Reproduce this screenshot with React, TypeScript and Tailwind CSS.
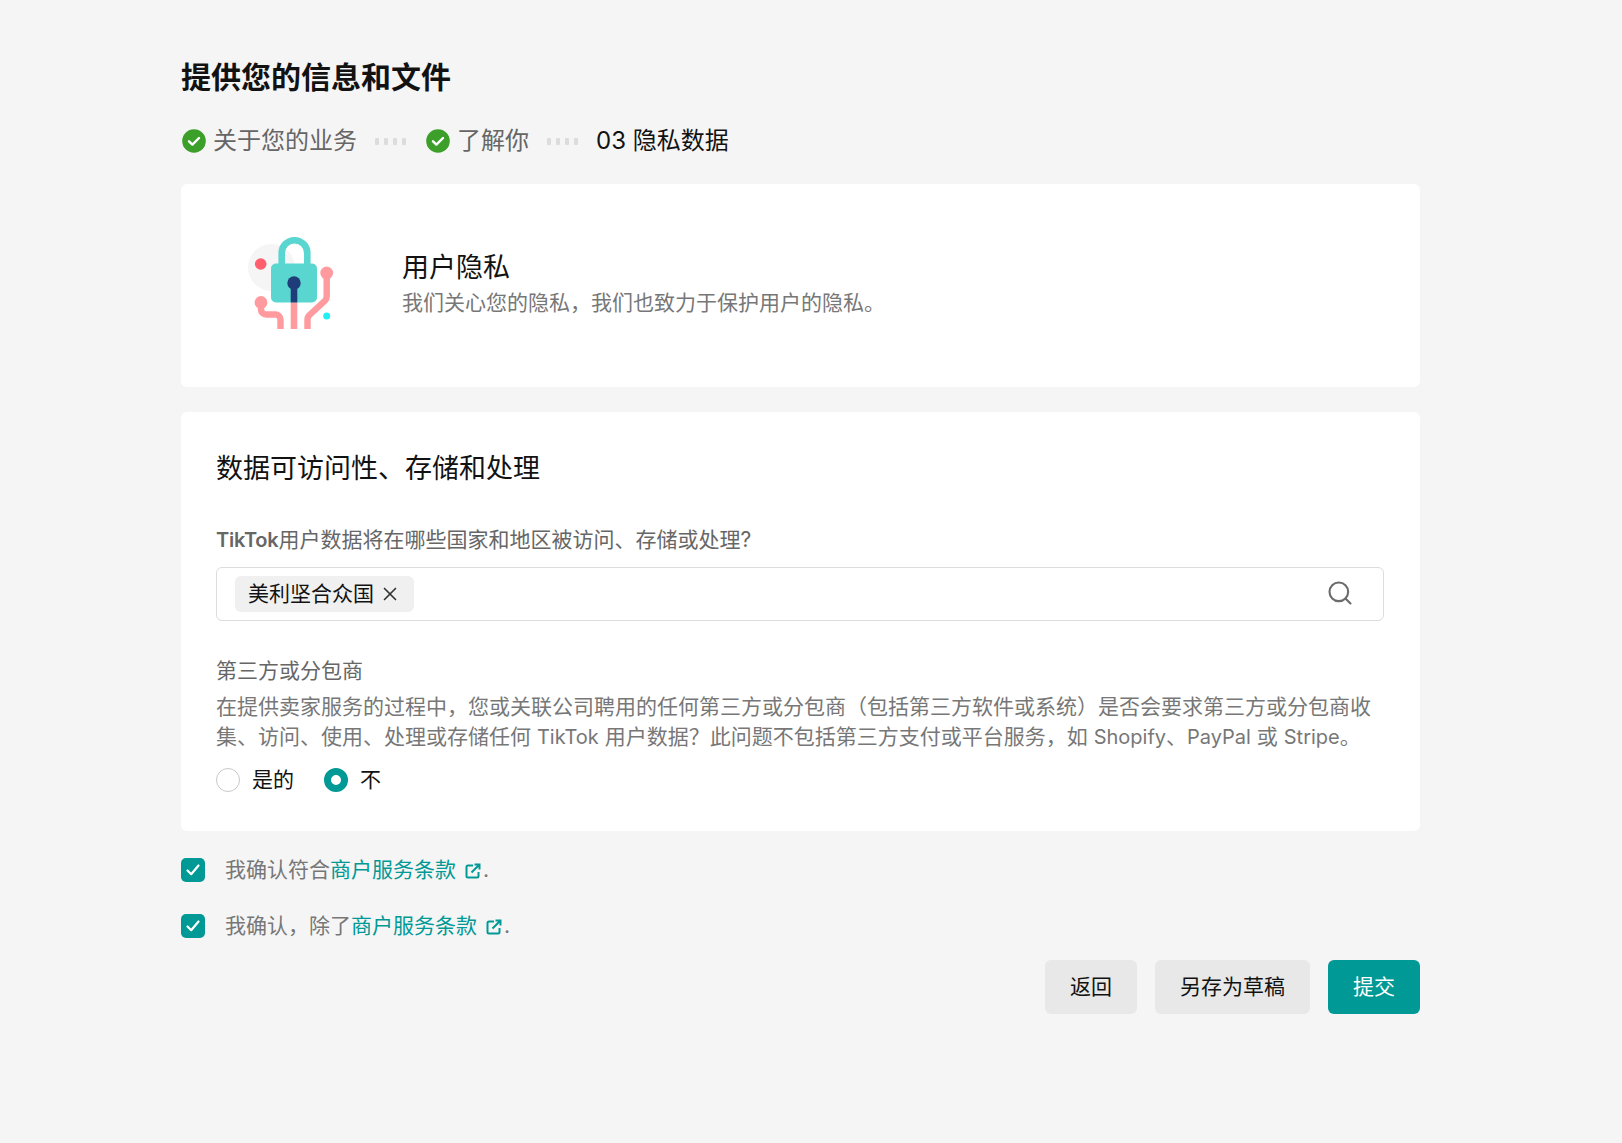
import { Search, X } from "lucide-react";

function StepCheck() {
  return (
    <svg width="24" height="24" viewBox="0 0 24 24" className="shrink-0">
      <circle cx="12" cy="12" r="11.800" fill="#3c9f2a" />
      <path d="M7 12.300l3.400 3.300L17 9" fill="none" stroke="#fff" strokeWidth="2.400" strokeLinecap="round" strokeLinejoin="round" />
    </svg>
  );
}

function Dots() {
  return (
    <div className="flex gap-[5px] mx-[18px]">
      <span className="w-1 h-[7px] rounded-[1px] bg-[#dcdcdc]" />
      <span className="w-1 h-[7px] rounded-[1px] bg-[#dcdcdc]" />
      <span className="w-1 h-[7px] rounded-[1px] bg-[#dcdcdc]" />
      <span className="w-1 h-[7px] rounded-[1px] bg-[#dcdcdc]" />
    </div>
  );
}

function LockArt() {
  return (
    <svg width="130" height="130" viewBox="0 0 130 130" className="shrink-0">
      <circle cx="51.500" cy="46.500" r="23.500" fill="#f5f5f5" />
      <circle cx="40.700" cy="43" r="5.800" fill="#ff5f6d" />
      <path d="M61.700 46V32a12.800 12.800 0 0 1 25.600 0V46" fill="none" stroke="#5ad6d0" strokeWidth="6.600" />
      <rect x="51" y="42.500" width="46" height="39" rx="5" fill="#5ad6d0" />
      <circle cx="41" cy="81.500" r="6.400" fill="#ff9a9e" />
      <circle cx="106.700" cy="52" r="6.400" fill="#ff9a9e" />
      <path d="M41 82v6.500a5 5 0 0 0 5 5h9.500a5 5 0 0 1 5 5V108" fill="none" stroke="#ff9a9e" strokeWidth="6.400" />
      <path d="M106.700 52v23.500a6 6 0 0 1-1.800 4.300L89.500 94a6 6 0 0 0-2 4.500V108" fill="none" stroke="#ff9a9e" strokeWidth="6.400" />
      <path d="M74 81.500V108" fill="none" stroke="#ff9a9e" strokeWidth="6.600" />
      <circle cx="74" cy="62" r="6.700" fill="#1f3d78" />
      <rect x="70.700" y="62" width="6.600" height="19.500" fill="#1f3d78" />
      <circle cx="106.700" cy="95" r="3.500" fill="#22f0f0" />
    </svg>
  );
}

function CheckBox() {
  return (
    <span className="w-6 h-6 shrink-0 rounded-[5px] bg-[#009995] flex items-center justify-center">
      <svg width="18" height="18" viewBox="0 0 18 18">
        <path d="M3.500 9.500l3.700 3.700L14.500 4.500" fill="none" stroke="#fff" strokeWidth="2.200" strokeLinecap="round" strokeLinejoin="round" />
      </svg>
    </span>
  );
}

function ExternalIcon() {
  return (
    <svg width="16" height="16" viewBox="0 0 16 16" className="inline-block ml-[9px] mr-[2px] align-[-2px]">
      <path d="M8 2.500H3a1.500 1.500 0 0 0-1.500 1.500v9A1.500 1.500 0 0 0 3 14.500h9a1.500 1.500 0 0 0 1.500-1.500V9" fill="none" stroke="#009995" strokeWidth="2" />
      <path d="M6.500 9.500L14 2M9.500 1.500h5v5" fill="none" stroke="#009995" strokeWidth="2" />
    </svg>
  );
}

// latin runs sit a bit narrower than Inter at the body size
function Latin({ children }: { children: string }) {
  return <span className="text-[20px]">{children}</span>;
}

export default function App() {
  return (
    <div className="min-h-[1143px] bg-[#f5f5f5] font-['Inter','Noto_Sans_CJK_SC',sans-serif] text-[21px] pt-[58px] px-[181px] pb-[130px]">
      <div className="w-[1239px]">
        <h1 className="text-[30px] leading-[38px] font-bold text-[#121212]">提供您的信息和文件</h1>

        <div className="flex items-center mt-[27px] h-[36px] text-[24px] text-[#666] pl-px">
          <StepCheck />
          <span className="ml-[7px]">关于您的业务</span>
          <Dots />
          <span className="ml-[2px]">
            <StepCheck />
          </span>
          <span className="ml-[7px]">了解你</span>
          <Dots />
          <span className="text-[#121212]">03 隐私数据</span>
        </div>

        <div className="mt-[25px] h-[203px] bg-white rounded-[6px] flex items-center pl-[39px]">
          <LockArt />
          <div className="ml-[52px] pb-[3px]">
            <p className="text-[27px] leading-[34px] mb-[3px] text-[#121212]">用户隐私</p>
            <p className="text-[21px] leading-[30px] text-[#777]">我们关心您的隐私，我们也致力于保护用户的隐私。</p>
          </div>
        </div>

        <div className="mt-[25px] h-[419px] bg-white rounded-[6px] pl-[35px] pr-[36px] pt-[37px]">
          <p className="text-[27px] leading-[40px] text-[#121212]">数据可访问性、存储和处理</p>

          <p className="mt-[36px] leading-[30px] text-[#666]">
            <span className="font-semibold text-[20px] tracking-[-0.25px]">TikTok</span>用户数据将在哪些国家和地区被访问、存储或处理?
          </p>

          <div className="mt-[12px] h-[54px] rounded-[6px] border border-[#dcdcdc] flex items-center justify-between pl-[18px] pr-[29px]">
            <span className="h-[36px] rounded-[6px] bg-[#f0f0f0] pl-[13px] pr-[13px] flex items-center text-[#121212]">
              美利坚合众国
              <X size={22} strokeWidth={1.800} className="ml-[5px] text-[#333]" />
            </span>
            <Search size={28} strokeWidth={1.800} className="text-[#6b6b6b] -mt-[2px]" />
          </div>

          <p className="mt-[35px] leading-[30px] text-[#666]">第三方或分包商</p>
          <p className="mt-[6px] leading-[30px] text-[#777]">
            在提供卖家服务的过程中，您或关联公司聘用的任何第三方或分包商（包括第三方软件或系统）是否会要求第三方或分包商收集、访问、使用、处理或存储任何 <Latin>TikTok</Latin> 用户数据？此问题不包括第三方支付或平台服务，如 <Latin>Shopify</Latin>、<Latin>PayPal</Latin> 或 <Latin>Stripe</Latin>。
          </p>

          <div className="flex items-center mt-[15px] h-[26px] text-[#121212]">
            <span className="w-6 h-6 rounded-full border border-[#c8c8c8]" />
            <span className="ml-3">是的</span>
            <span className="ml-[30px] w-6 h-6 rounded-full border-[7px] border-[#009995] bg-white" />
            <span className="ml-3">不</span>
          </div>
        </div>

        <div className="flex items-center mt-[26px] h-[26px] text-[#777]">
          <CheckBox />
          <span className="ml-[20px]">
            我确认符合<span className="text-[#009995]">商户服务条款</span>
            <ExternalIcon />.
          </span>
        </div>
        <div className="flex items-center mt-[30px] h-[26px] text-[#777]">
          <CheckBox />
          <span className="ml-[20px]">
            我确认，除了<span className="text-[#009995]">商户服务条款</span>
            <ExternalIcon />.
          </span>
        </div>

        <div className="flex justify-end gap-[18px] mt-[21px]">
          <button className="w-[92px] h-[54px] rounded-[6px] bg-[#e8e8e8] text-[#121212]">返回</button>
          <button className="w-[155px] h-[54px] rounded-[6px] bg-[#e8e8e8] text-[#121212]">另存为草稿</button>
          <button className="w-[92px] h-[54px] rounded-[6px] bg-[#009995] text-white">提交</button>
        </div>
      </div>
    </div>
  );
}
